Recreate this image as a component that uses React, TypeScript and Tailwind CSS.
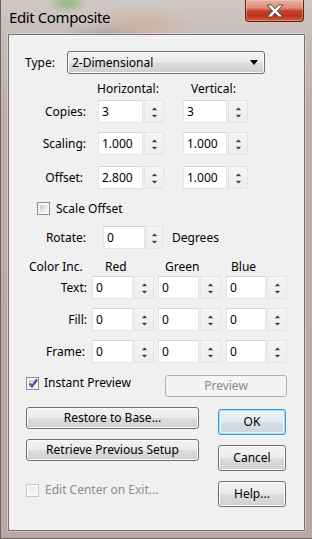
import React from "react";

// Win7-style dialog bits

function Spinner({ className = "w-[20px]" }: { className?: string }) {
  return (
    <div
      className={`h-[23px] ${className} ml-[1px] border border-[#e4e4e4] bg-[linear-gradient(180deg,#f5f5f5_0%,#ededed_100%)] flex flex-col items-center justify-between pt-[6px] pb-[4px]`}
    >
      <svg width="5" height="4" viewBox="0 0 5 4">
        <path d="M0 3 L2.5 0.5 L5 3 Z" fill="#3c3c3c" />
        <path d="M0 3.5 H5" stroke="#cfcfcf" strokeWidth="1" />
      </svg>
      <svg width="5" height="4" viewBox="0 0 5 4">
        <path d="M0 0.5 H5" stroke="#cfcfcf" strokeWidth="1" />
        <path d="M0 1 L2.5 3.5 L5 1 Z" fill="#3c3c3c" />
      </svg>
    </div>
  );
}

function NumBox({ value, className }: { value: string; className: string }) {
  return (
    <div
      className={`h-[23px] ${className} bg-white border border-[#e1e4e8] border-t-[#d0d3d8] flex items-center pl-[3px] leading-none`}
    >
      {value}
    </div>
  );
}

function Check({ checked, disabled }: { checked?: boolean; disabled?: boolean }) {
  return (
    <div
      className={`relative w-[13px] h-[13px] shrink-0 border p-[2px] ${
        disabled ? "border-[#c5c5c5] bg-[#f7f7f7]" : "border-[#8e8f8f] bg-[#f4f4f4]"
      }`}
    >
      <div
        className={`w-full h-full ${
          disabled
            ? "bg-[#efefef]"
            : "bg-[linear-gradient(135deg,#c9ccd0_0%,#e6e7e8_60%,#f2f2f2_100%)]"
        }`}
      />
      {checked && (
        <svg className="absolute left-[0px] top-[-1px]" width="13" height="13" viewBox="0 0 13 13">
          <path d="M2.5 6.5 L5 9.5 L10 2.5" fill="none" stroke="#4257a1" strokeWidth="2.2" />
        </svg>
      )}
    </div>
  );
}

function Btn({
  children,
  className,
  primary,
  disabled,
}: {
  children: React.ReactNode;
  className: string;
  primary?: boolean;
  disabled?: boolean;
}) {
  let look =
    "border-[#707070] bg-[linear-gradient(180deg,#f2f2f2_0%,#ebebeb_48%,#dddddd_52%,#cfcfcf_100%)] shadow-[inset_0_0_0_1px_#fbfbfb]";
  if (primary)
    look =
      "border-[#3c9bd6] bg-[linear-gradient(180deg,#eef4f8_0%,#e4ebf0_48%,#d6dde3_52%,#cdd4da_100%)] shadow-[inset_0_0_0_1px_#9fdcfb,inset_0_0_0_2px_#e6f6fe]";
  if (disabled) look = "border-[#adb2b5] bg-[#f4f4f4] text-[#8a8a8a]";
  return (
    <div className={`flex items-center justify-center rounded-[3px] border leading-none ${look} ${className}`}>
      {children}
    </div>
  );
}

function CloseButton() {
  return (
    <div className="mr-[8px] w-[59px] h-[22px] rounded-b-[4px] border border-t-0 border-[#5e2216] bg-[linear-gradient(180deg,#eab2a3_0%,#dc8b76_38%,#c8412a_52%,#b9341f_75%,#d45c40_100%)] shadow-[inset_0_0_0_1px_rgba(255,210,190,0.4)] flex items-center justify-center">
      <svg width="18" height="14" viewBox="0 0 18 14">
        <polygon
          points="1,1 5.5,1 9,4.8 12.5,1 17,1 11.4,7 17,13 12.5,13 9,9.2 5.5,13 1,13 6.6,7"
          fill="#fff"
          stroke="#474747"
          strokeWidth="1"
          strokeLinejoin="round"
        />
      </svg>
    </div>
  );
}

export default function App() {
  return (
    <div className="w-[312px] h-[539px] overflow-hidden flex flex-col font-['Noto_Sans',Arial,sans-serif] text-[12px] text-black border-l border-b border-[#6f6262] bg-[radial-gradient(ellipse_22px_10px_at_66px_3px,rgba(110,175,90,0.6),transparent),radial-gradient(ellipse_55px_18px_at_140px_24px,rgba(215,160,120,0.45),transparent),radial-gradient(ellipse_45px_10px_at_105px_33px,rgba(110,140,165,0.35),transparent),linear-gradient(180deg,#d0c9c6_0px,#c7bcb9_34px,#bcacaa_120px,#b8a7a4_100%)]">
      {/* title bar */}
      <div className="h-[34px] shrink-0 flex items-start justify-between">
        <div className="pl-[8px] pt-[8px] text-[15px] leading-[18px] tracking-[-0.4px]">Edit Composite</div>
        <CloseButton />
      </div>

      {/* client area */}
      <div className="mx-[7px] h-[497px] border border-[#7b7070] shadow-[0_0_0_1px_rgba(255,255,255,0.35)] bg-[#f0f0f0] flex flex-col">
        {/* type */}
        <div className="mt-[16px] pl-[16px] flex items-center h-[23px]">
          <div className="w-[42px]">Type:</div>
          <div className="w-[198px] h-[23px] rounded-[3px] border border-[#707070] bg-[linear-gradient(180deg,#f2f2f2_0%,#ebebeb_48%,#dddddd_52%,#cfcfcf_100%)] shadow-[inset_0_0_0_1px_#fafafa] flex items-center justify-between pl-[4px] pr-[6px]">
            <span>2-Dimensional</span>
            <svg width="8" height="5" viewBox="0 0 8 5">
              <path d="M0 0 H8 L4 5 Z" fill="#000" />
            </svg>
          </div>
        </div>

        {/* headers */}
        <div className="mt-[7px] h-[16px] leading-[16px] pl-[88px] flex">
          <div className="w-[94px]">Horizontal:</div>
          <div>Vertical:</div>
        </div>

        {/* copies / scaling / offset */}
        <div className="mt-[3px] flex items-center">
          <div className="w-[77px] text-right">Copies:</div>
          <NumBox value="3" className="ml-[12px] w-[45px]" />
          <Spinner />
          <NumBox value="3" className="ml-[19px] w-[44px]" />
          <Spinner />
        </div>
        <div className="mt-[9px] flex items-center">
          <div className="w-[77px] text-right">Scaling:</div>
          <NumBox value="1.000" className="ml-[12px] w-[45px]" />
          <Spinner />
          <NumBox value="1.000" className="ml-[19px] w-[44px]" />
          <Spinner />
        </div>
        <div className="mt-[11px] flex items-center">
          <div className="w-[77px] text-right pr-[3px]">Offset:</div>
          <NumBox value="2.800" className="ml-[12px] w-[45px]" />
          <Spinner />
          <NumBox value="1.000" className="ml-[19px] w-[44px]" />
          <Spinner />
        </div>

        {/* scale offset */}
        <div className="mt-[12px] h-[15px] pl-[28px] flex items-center">
          <Check />
          <span className="ml-[6px]">Scale Offset</span>
        </div>

        {/* rotate */}
        <div className="mt-[10px] flex items-center">
          <div className="w-[77px] text-right">Rotate:</div>
          <NumBox value="0" className="ml-[17px] w-[42px]" />
          <Spinner className="w-[17px]" />
          <span className="ml-[9px]">Degrees</span>
        </div>

        {/* color inc */}
        <div className="mt-[10px] h-[16px] leading-[16px] pl-[20px] flex">
          <div className="w-[76px]">Color Inc.</div>
          <div className="w-[60px]">Red</div>
          <div className="w-[66px]">Green</div>
          <div>Blue</div>
        </div>
        {[
          ["Text:", "mt-[1px]", "w-[78px]"],
          ["Fill:", "mt-[9px]", "w-[78px]"],
          ["Frame:", "mt-[9px]", "w-[76px] pr-[0px]"],
        ].map(([label, mt, lw]) => (
          <div key={label} className={`${mt} flex items-center`}>
            <div className={`${lw} text-right`}>{label}</div>
            <NumBox value="0" className={label === "Frame:" ? "ml-[7px] w-[41px]" : "ml-[5px] w-[41px]"} />
            <Spinner />
            <NumBox value="0" className="ml-[4px] w-[41px]" />
            <Spinner className="w-[21px]" />
            <NumBox value="0" className="ml-[5px] w-[40px]" />
            <Spinner />
          </div>
        ))}

        {/* instant preview */}
        <div className="mt-[12px] pl-[17px] pr-[17px] flex items-start justify-between">
          <div className="h-[16px] flex items-center">
            <Check checked />
            <span className="ml-[5px]">Instant Preview</span>
          </div>
          <Btn disabled className="w-[122px] h-[22px]">
            Preview
          </Btn>
        </div>

        {/* bottom buttons */}
        <div className="mt-[10px] pl-[17px] flex items-start">
          <div className="w-[173px] flex flex-col">
            <Btn className="h-[22px]">Restore to Base...</Btn>
            <Btn className="mt-[10px] h-[22px]">Retrieve Previous Setup</Btn>
            <div className="mt-[21px] h-[16px] flex items-center">
              <Check disabled />
              <span className="ml-[6px] text-[#8d8d8d]">Edit Center on Exit...</span>
            </div>
          </div>
          <div className="ml-[19px] w-[68px] flex flex-col">
            <Btn primary className="mt-[2px] h-[26px]">
              OK
            </Btn>
            <Btn className="mt-[10px] h-[26px]">Cancel</Btn>
            <Btn className="mt-[10px] h-[26px]">Help...</Btn>
          </div>
        </div>
      </div>
    </div>
  );
}
